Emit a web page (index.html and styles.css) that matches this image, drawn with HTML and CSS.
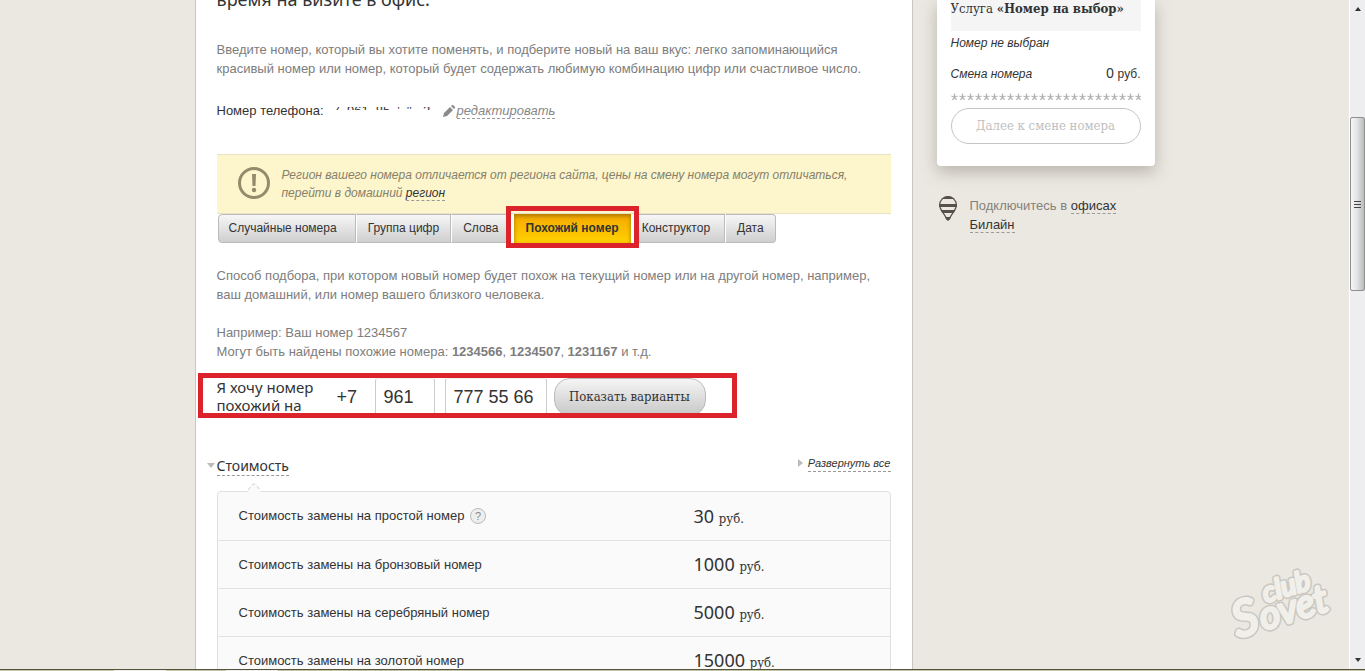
FILE: index.html
```html
<!DOCTYPE html>
<html lang="ru">
<head>
<meta charset="utf-8">
<title>Номер на выбор</title>
<link rel="stylesheet" href="styles.css">
</head>
<body>
<div class="window">
  <div class="viewport">
    <div class="page">
      <main class="main">
        <h1 class="title">время на визите в офис.</h1>
        <p class="text intro">Введите номер, который вы хотите поменять, и подберите новый на ваш вкус: легко запоминающийся<br>красивый номер или номер, который будет содержать любимую комбинацию цифр или счастливое число.</p>
        <div class="phone">
          <span>Номер телефона:</span>
          <span class="masked"><span>-7</span><span>961</span><span>85</span><span>'</span><span>''</span><span>-2</span></span>
          <span class="edit">
            <svg width="12" height="12" viewBox="0 0 12 12" aria-hidden="true"><path d="M0 12 1 8 7 2l3 3-6 6zM8 1l1-1h1l2 2v1l-1 1z" fill="#8a8a8a"/></svg>
            <a class="dashed" href="#edit">редактировать</a>
          </span>
        </div>
        <div class="notice">
          <svg width="34" height="34" viewBox="0 0 34 34" aria-hidden="true"><circle cx="17" cy="17" r="14.500" fill="none" stroke="#938b6c" stroke-width="3"/><path d="M15 8h4l-.5 12h-3z" fill="#938b6c"/><circle cx="17" cy="24" r="2.200" fill="#938b6c"/></svg>
          <p>Регион вашего номера отличается от региона сайта, цены на смену номера могут отличаться,<br>перейти в домашний <a class="dashed dark" href="#region">регион</a></p>
        </div>
        <div class="tabs">
          <button type="button" class="tab tab-wide">Случайные номера</button>
          <button type="button" class="tab">Группа цифр</button>
          <button type="button" class="tab">Слова</button>
          <div class="active-cell"><button type="button" class="tab active">Похожий номер</button></div>
          <button type="button" class="tab tab-after">Конструктор</button>
          <button type="button" class="tab">Дата</button>
        </div>
        <p class="text about">Способ подбора, при котором новый номер будет похож на текущий номер или на другой номер, например,<br>ваш домашний, или номер вашего близкого человека.</p>
        <p class="text sample">Например: Ваш номер 1234567<br>Могут быть найдены похожие номера: <b>1234566</b>, <b>1234507</b>, <b>1231167</b> и т.д.</p>
        <form class="search">
          <label class="search-label" for="number">Я хочу номер похожий на</label>
          <span class="prefix">+7</span>
          <input class="field code" type="text" value="961" aria-label="Код">
          <input class="field number" id="number" type="text" value="777 55 66">
          <button class="show" type="button">Показать варианты</button>
        </form>
        <div class="cost-head">
          <h2><a class="dashed" href="#cost">Стоимость</a></h2>
          <a class="expand" href="#all"><span class="dashed">Развернуть все</span></a>
        </div>
        <div class="cost">
          <svg class="notch" width="16" height="10" viewBox="0 0 16 10" aria-hidden="true"><path d="M1 10 8 1l7 9" fill="#fafafa"/><path d="M2 7 6 2q2-2 4 0l4 5" fill="none" stroke="#ccc" stroke-dasharray="4 2"/></svg>
          <table>
            <tr><td>Стоимость замены на простой номер <button class="help" type="button">?</button></td><td class="price">30 <small>руб.</small></td></tr>
            <tr><td>Стоимость замены на бронзовый номер</td><td class="price">1000 <small>руб.</small></td></tr>
            <tr><td>Стоимость замены на серебряный номер</td><td class="price">5000 <small>руб.</small></td></tr>
            <tr><td>Стоимость замены на золотой номер</td><td class="price">15000 <small>руб.</small></td></tr>
          </table>
        </div>
      </main>
      <aside class="side">
        <section class="card">
          <h3>Услуга <b>«Номер на выбор»</b></h3>
          <p class="chosen">Номер не выбран</p>
          <div class="line"><i>Смена номера</i><span class="sum">0 <small>руб.</small></span></div>
          <svg class="stars" width="100%" height="8" aria-hidden="true"><defs><pattern id="star" width="8" height="8" patternUnits="userSpaceOnUse"><path d="M3.500 4V.5M3.500 4 .3 3M3.500 4l3.200-1M3.500 4l-2 3M3.500 4l2 3" stroke="#b4b4b4" stroke-width="1.300"/></pattern></defs><rect width="100%" height="8" fill="url(#star)"/></svg>
          <button class="next" type="button" disabled>Далее к смене номера</button>
        </section>
        <div class="office">
          <svg width="18" height="25" viewBox="0 0 18 25" aria-hidden="true"><defs><clipPath id="pin"><path d="M9 0a9 9 0 0 1 9 9c0 5-5 9-7 14q-2 3-4 0C5 18 0 14 0 9a9 9 0 0 1 9-9z"/></clipPath></defs><g clip-path="url(#pin)"><path d="M0 0h18v3H0zM0 8h18v3H0zM0 14h18v3H0zM0 21h18v4H0z" fill="#56524b"/><path d="M9 0a9 9 0 0 1 9 9c0 5-5 9-7 14q-2 3-4 0C5 18 0 14 0 9a9 9 0 0 1 9-9z" fill="none" stroke="#56524b" stroke-width="2.500"/></g></svg>
          <p>Подключитесь в <a class="dashed dark" href="#offices">офисах</a><br><a class="dashed dark" href="#beeline">Билайн</a></p>
        </div>
      </aside>
    </div>
    <svg class="logo" width="110" height="80" viewBox="0 0 110 80" role="img" aria-label="club Sovet">
      <g transform="rotate(-17 10 72)">
        <g class="logo-edge"><text x="9" y="71" class="initial">S</text><text x="36" y="71" class="big">ovet</text><text x="46" y="45" class="small">club</text></g>
        <g class="logo-fill"><text x="9" y="71" class="initial">S</text><text x="36" y="71" class="big">ovet</text><text x="46" y="45" class="small">club</text></g>
      </g>
    </svg>
    <div class="scrollbar" aria-hidden="true">
      <span class="arrow up"></span>
      <span class="thumb"><i></i><i></i><i></i></span>
      <span class="arrow down"></span>
    </div>
  </div>
  <div class="taskbar"><span></span><span></span></div>
</div>
</body>
</html>
```

FILE: styles.css
```css
*, *::before, *::after { box-sizing: border-box; }
body {
  margin: 0;
  font: 13px/19px "Liberation Sans", Arial, sans-serif;
  color: #333;
  background: #ebe8e2;
}
h1, h2, h3, p { margin: 0; font-weight: normal; }
a { color: inherit; text-decoration: none; }
button, input { font: inherit; color: inherit; }

.window { display: flex; flex-direction: column; height: 100vh; overflow: hidden; }
.viewport { position: relative; display: flex; flex: 1; min-height: 0; overflow: hidden; }
.page {
  flex: 1;
  display: flex;
  justify-content: center;
  align-items: flex-start;
  gap: 24px;
}
.main {
  flex: 0 1 718px;
  min-width: 0;
  padding: 0 21px;
  background: #fff;
  border: solid #c9c7c4;
  border-width: 0 1px;
}
.title {
  margin-top: -15px;
  font: 18px/28px "Noto Sans", sans-serif;
}
.text { color: #7d7d7d; }
.intro { margin-top: 27px; }
.dashed { border-bottom: 1px dashed #999; }
.dark { color: #333; }

.phone { display: flex; margin-top: 23px; }
.masked { display: flex; gap: 7px; width: 119px; padding-left: 5px; clip-path: inset(6px 0 10px 0); }
.edit { display: flex; align-items: center; gap: 2px; color: #888; font-style: italic; }
.edit .dashed { line-height: 15px; }

.notice {
  display: flex;
  gap: 11px;
  margin-top: 34px;
  padding: 11px 20px;
  height: 60px;
  background: #fdf5cc;
  border: solid #e9e3c3;
  border-width: 1px 0;
  color: #85806b;
  font-size: 12px;
  font-style: italic;
  line-height: 18px;
}
.notice svg { flex: none; }
.notice p { white-space: nowrap; }

.tabs { display: flex; height: 29px; margin-left: 1px; }
.tab {
  padding: 0 11px;
  border: 1px solid #bbb;
  border-left-color: #fff;
  background: linear-gradient(#f6f6f6, #cfcfcf);
  white-space: nowrap;
  font-size: 12px;
}
.tab:first-child { border-left-color: #bbb; border-radius: 4px 0 0 4px; }
.tab:last-child { border-radius: 0 4px 4px 0; }
.tab-wide { padding: 0 18px 0 10px; }
.tab-after { padding: 0 14px 0 7px; }
.active-cell { position: relative; display: flex; padding: 0 3px; }
.active-cell::after {
  content: "";
  position: absolute;
  inset: -8px -5px -5px -5px;
  border: 5px solid #dc232b;
}
.active-cell .active {
  padding: 0 12px;
  border: 0;
  border-radius: 0;
  font-weight: bold;
  background: linear-gradient(#f5a800, #ffd200);
  box-shadow: inset 0 2px 4px #a87500;
}
.about { margin-top: 23px; }
.sample { margin-top: 19px; }

.search { position: relative; display: flex; margin-top: 17px; height: 38px; }
.search::after {
  content: "";
  position: absolute;
  inset: -5px auto -2px -19px;
  width: 539px;
  border: 5px solid #dc232b;
  pointer-events: none;
}
.search-label { width: 120px; padding-right: 18px; font: 15px/18px "Noto Sans", sans-serif; }
.prefix { width: 38px; font-size: 18px; line-height: 38px; }
.field {
  height: 38px;
  padding: 0 8px;
  border: 1px solid #ccc;
  border-top-color: #eee;
  border-radius: 3px;
  background: #fff;
  font-size: 18px;
}
.code { width: 60px; }
.number { width: 102px; margin-left: 10px; }
.show {
  width: 152px;
  margin-left: 7px;
  padding: 0;
  border: 1px solid #bbb;
  border-radius: 16px;
  background: linear-gradient(#f5f5f5, #c8c8c8);
  font: 13px/18px "DejaVu Serif Condensed", "DejaVu Serif", serif;
}

.cost-head { display: flex; justify-content: space-between; margin-top: 40px; height: 35px; }
.cost-head h2 { position: relative; font: 14px/20px "Noto Sans", sans-serif; }
.cost-head h2::before {
  content: "";
  position: absolute;
  left: -10px;
  top: 7px;
  border: 4px solid transparent;
  border-top: 5px solid #bbb;
  border-bottom: 0;
}
.expand { display: flex; align-items: flex-start; gap: 5px; font-size: 11px; line-height: 15px; font-style: italic; }
.expand::before {
  content: "";
  margin-top: 3px;
  border: 4px solid transparent;
  border-left: 5px solid #bbb;
  border-right: 0;
}
.cost { position: relative; border: 1px solid #e0e0e0; border-radius: 4px; background: #fafafa; }
.notch { position: absolute; left: 28px; top: -9px; }
table { width: 100%; border-collapse: collapse; }
tr + tr { border-top: 1px solid #e2e2e2; }
td { height: 48px; padding: 0 0 0 21px; }
.price { width: 217px; font: 18px/24px "Noto Sans", sans-serif; }
.price small { font: 13px "DejaVu Serif Condensed", serif; }
.help {
  width: 16px;
  height: 16px;
  margin-left: 2px;
  padding: 0;
  border: 1px solid #bbb;
  border-radius: 50%;
  background: #eee;
  color: #888;
  font-size: 11px;
  line-height: 14px;
}

.side { flex: 0 0 218px; }
.card {
  padding: 0 14px 22px;
  background: #fff;
  border-radius: 0 0 4px 4px;
  box-shadow: 0 6px 16px rgba(90, 85, 70, .35);
}
.card h3 { padding: 0 0 13px; background: #f5f5f5; font: 13px/18px "DejaVu Serif Condensed", serif; white-space: nowrap; }
.chosen { margin-top: 3px; font-size: 12px; font-style: italic; }
.line { display: flex; justify-content: space-between; align-items: baseline; margin-top: 10px; font-size: 12px; }
.sum { font: 14px/20px "Noto Sans", sans-serif; }
.sum small { font: 12px "Liberation Sans", sans-serif; }
.stars { display: block; margin: 9px 0 7px; }
.next {
  width: 100%;
  height: 36px;
  padding: 0;
  border: 1px solid #c4c4c4;
  border-radius: 18px;
  background: #fff;
  color: #c0c0c0;
  font: 13px/18px "DejaVu Serif Condensed", serif;
}
.office { display: flex; gap: 13px; margin-top: 30px; padding-left: 2px; color: #85827c; }

.logo { position: absolute; right: 26px; bottom: 22px; overflow: visible; font-family: Lato, sans-serif; font-style: italic; }
.initial { font-size: 50px; }
.big { font-size: 39px; }
.small { font-size: 28px; }
.logo-edge { fill: #c9c7bf; stroke: #c9c7bf; stroke-width: 6px; stroke-linejoin: round; }
.logo-fill { fill: #f1efea; stroke: #f1efea; stroke-width: 3px; stroke-linejoin: round; }

.scrollbar {
  flex: 0 0 16px;
  display: flex;
  flex-direction: column;
  align-items: center;
  padding: 7px 0;
  border-left: 1px solid #fff;
  background: #eeedf0;
}
.arrow { border: 3px solid transparent; }
.up { border-top: 0; border-bottom: 4px solid #333; }
.down { border-bottom: 0; border-top: 4px solid #333; margin-top: auto; }
.thumb {
  display: flex;
  flex-direction: column;
  align-items: center;
  justify-content: center;
  gap: 2px;
  width: 15px;
  height: 174px;
  margin-top: 106px;
  border: 1px solid #8f8f8f;
  border-radius: 2px;
  background: linear-gradient(90deg, #f6f6f6, #e2e4e5 45%, #b9bcbe);
}
.thumb i { width: 7px; height: 1px; background: #444; }
.taskbar {
  display: flex;
  gap: 60px;
  height: 2px;
  padding-left: 114px;
  border-top: 1px solid #55533a;
  background: #c5c6a5;
}
.taskbar span { width: 52px; background: #eee; }
```
